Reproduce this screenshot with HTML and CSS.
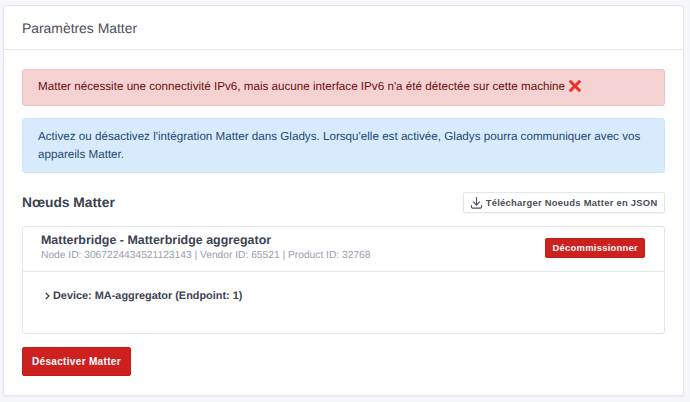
FILE: index.html
```html
<!DOCTYPE html>
<html lang="fr">
<head>
    <meta charset="UTF-8">
    <title>Paramètres Matter</title>
    <link rel="stylesheet" href="styles.css">
</head>
<body>
    <div class="card">
        <div class="card-header">Paramètres Matter</div>
        <div class="card-body">
            <div class="alert alert-danger">Matter nécessite une connectivité IPv6, mais aucune interface IPv6 n'a été détectée sur cette machine <svg class="cross" viewBox="0 0 16 16"><path d="M2 2 L14 14 M14 2 L2 14"/></svg></div>
            <div class="alert alert-info">Activez ou désactivez l'intégration Matter dans Gladys. Lorsqu'elle est activée, Gladys pourra communiquer avec vos appareils Matter.</div>

            <div class="section-head">
                <h3>Nœuds Matter</h3>
                <button class="btn btn-outline">
                    <svg class="icon" viewBox="0 0 24 24"><path d="M4 17v2a2 2 0 0 0 2 2h12a2 2 0 0 0 2-2v-2"/><path d="M7 11l5 5l5-5"/><path d="M12 4v12"/></svg>
                    Télécharger Noeuds Matter en JSON
                </button>
            </div>

            <div class="node">
                <div class="node-header">
                    <div>
                        <div class="node-title">Matterbridge - Matterbridge aggregator</div>
                        <div class="node-meta">Node ID: 3067224434521123143 | Vendor ID: 65521 | Product ID: 32768</div>
                    </div>
                    <button class="btn btn-danger btn-sm">Décommissionner</button>
                </div>
                <div class="node-body">
                    <div class="device">
                        <svg class="chevron" viewBox="0 0 8 10"><path d="M2.8 2 L6 5 L2.8 8"/></svg>
                        Device: MA-aggregator (Endpoint: 1)
                    </div>
                </div>
            </div>

            <button class="btn btn-danger btn-main">Désactiver Matter</button>
        </div>
    </div>
</body>
</html>
```

FILE: styles.css
```css
* {
    box-sizing: border-box;
}
body {
    margin: 0;
    padding: 5px 6.5px 7px 2.5px;
    background-color: #f5f7fb;
    font-family: "Liberation Sans", Arial, sans-serif;
    font-size: 11.65px;
    line-height: 18px;
    color: #495057;
    text-rendering: geometricPrecision;
}
.card {
    background-color: #fff;
    border: 1px solid #e3e6ec;
    border-radius: 3px;
    box-shadow: 0 1px 2px rgba(0, 0, 0, 0.05);
}
.card-header {
    height: 44px;
    padding-left: 18.5px;
    display: flex;
    align-items: center;
    border-bottom: 1px solid #e3e6ec;
    font-size: 13.9px;
    color: #495057;
}
.card-body {
    padding: 18.5px 18px 18.5px 18.5px;
}
.alert {
    padding: 8.5px 15px;
    margin-bottom: 12.5px;
    border: 1px solid transparent;
    border-radius: 3px;
}
.alert-danger {
    background-color: #f5d2d2;
    border-color: #f1c1c0;
    color: #6b0f0f;
}
.alert-info {
    background-color: #d8ebfc;
    border-color: #cbe7fb;
    color: #244a75;
}
.cross {
    width: 14px;
    height: 14px;
    vertical-align: -3px;
}
.cross path {
    fill: none;
    stroke: #e8332a;
    stroke-width: 3.4;
}
.section-head {
    display: flex;
    justify-content: space-between;
    align-items: center;
    margin-top: 19.3px;
    height: 21px;
    margin-bottom: 12.5px;
}
h3 {
    margin: 0;
    font-size: 13.8px;
    font-weight: bold;
    color: #3c4350;
}
.btn {
    display: inline-flex;
    align-items: center;
    border-radius: 2px;
    font-family: inherit;
    font-weight: bold;
    letter-spacing: 0.03em;
    cursor: pointer;
}
.btn-outline {
    height: 21px;
    padding: 0 6px 0 5.5px;
    gap: 1.5px;
    background-color: #fff;
    border: 1px solid #e3e6ec;
    box-shadow: 0 1px 1px rgba(0, 0, 0, 0.05);
    font-size: 9.4px;
    color: #495057;
}
.icon {
    width: 15px;
    height: 15px;
    margin-top: -1px;
    fill: none;
    stroke: #495057;
    stroke-width: 1.7;
    stroke-linecap: round;
    stroke-linejoin: round;
}
.node {
    border: 1px solid #e3e6ec;
    border-radius: 3px;
    margin-bottom: 12.5px;
}
.node-header {
    height: 45px;
    padding: 0 18.5px 2px 18px;
    display: flex;
    justify-content: space-between;
    align-items: center;
    border-bottom: 1px solid #e3e6ec;
}
.node-title {
    font-size: 12.44px;
    line-height: 16px;
    font-weight: bold;
    color: #3c4350;
}
.node-meta {
    font-size: 10.24px;
    line-height: 16px;
    color: #9aa0ac;
}
.btn-danger {
    background-color: #cd201f;
    border: 1px solid #c41c1b;
    color: #fff;
}
.btn-sm {
    height: 19.7px;
    padding: 0 6px;
    font-size: 9.4px;
}
.node-body {
    height: 61.5px;
    padding: 15px 20px;
}
.device {
    display: flex;
    align-items: center;
    gap: 2px;
    font-size: 10.9px;
    font-weight: bold;
    color: #3c4350;
}
.chevron {
    width: 8px;
    height: 10px;
    fill: none;
    stroke: #3c4350;
    stroke-width: 1.3;
}
.btn-main {
    height: 29.3px;
    padding: 0 9px;
    font-size: 10.05px;
}
```
